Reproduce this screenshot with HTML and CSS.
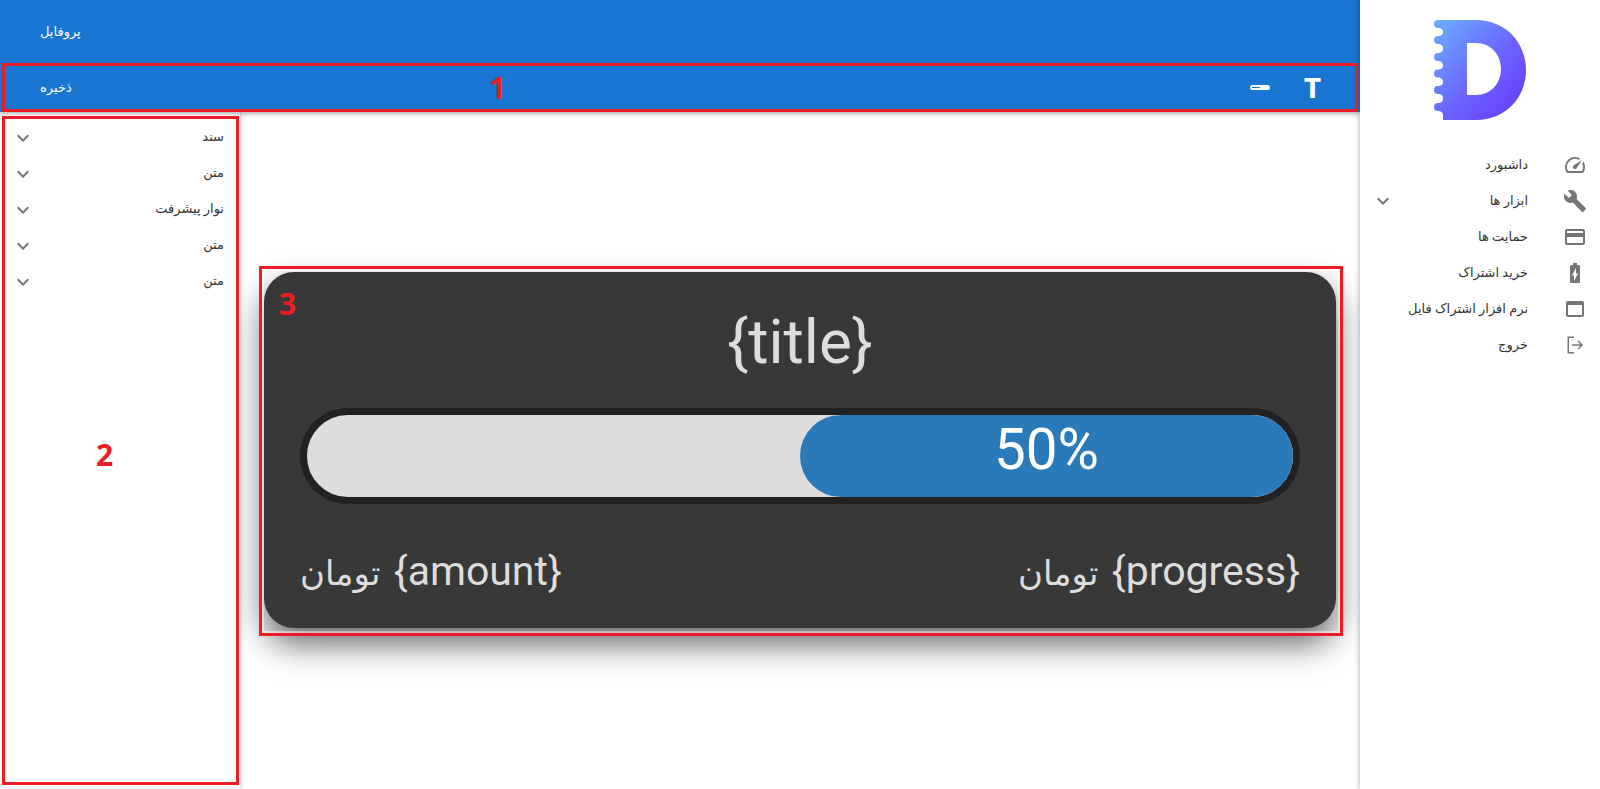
FILE: index.html
```html
<!DOCTYPE html>
<html lang="fa" dir="rtl">
<head>
    <meta charset="UTF-8">
    <meta name="viewport" content="width=device-width, initial-scale=1.0">
    <title>پروفایل</title>
    <link rel="stylesheet" href="styles.css">
</head>
<body>
    <div class="layout">
        <aside class="drawer">
            <div class="logo">
                <svg width="92" height="100" viewBox="0 0 92 100">
                    <defs>
                        <linearGradient id="logoFill" x1="0" y1="0" x2="1" y2="1">
                            <stop offset="0" stop-color="#6cb0ff"/>
                            <stop offset="0.55" stop-color="#6a62ff"/>
                            <stop offset="1" stop-color="#6a34ff"/>
                        </linearGradient>
                    </defs>
                    <path fill="url(#logoFill)" fill-rule="evenodd" d="M4 0H42C71 0 92 22 92 50S71 100 42 100H9V95.500C9 92 6.500 91 4 91A4 4 0 0 1 4 83C6.500 83 9 82 9 78.500C9 75 6.500 74 4 74A4 4 0 0 1 4 66C6.500 66 9 65 9 62C9 58.500 6.500 57.500 4 57.500A4 4 0 0 1 4 49.500C6.500 49.500 9 48.500 9 45.500C9 42 6.500 41 4 41A4 4 0 0 1 4 33C6.500 33 9 32 9 28.500C9 25 6.500 24 4 24A4 4 0 0 1 4 16C6.500 16 9 15 9 12C9 9 6.500 8 4 8A4 4 0 0 1 4 0ZM33 23V75H42C57 75 67 63 67 49S57 23 42 23Z"/>
                </svg>
            </div>
            <nav class="nav-list">
                <a class="nav-item">
                    <svg class="icon" viewBox="0 0 24 24"><path d="M20.38 8.57l-1.23 1.85a8 8 0 0 1-.22 7.58H5.07A8 8 0 0 1 15.58 6.85l1.85-1.23A10 10 0 0 0 3.35 19a2 2 0 0 0 1.72 1h13.85a2 2 0 0 0 1.74-1 10 10 0 0 0-.27-10.44zm-9.79 6.84a2 2 0 0 0 2.83 0l5.66-8.49-8.49 5.66a2 2 0 0 0 0 2.83z"/></svg>
                    <span class="nav-text">داشبورد</span>
                </a>
                <a class="nav-item">
                    <svg class="icon" viewBox="0 0 24 24"><path d="M22.7 19l-9.1-9.1c.9-2.3.4-5-1.5-6.9-2-2-5-2.4-7.4-1.3L9 6 6 9 1.6 4.7C.4 7.1.9 10.1 2.9 12.1c1.9 1.9 4.6 2.4 6.9 1.5l9.1 9.1c.4.4 1 .4 1.4 0l2.3-2.3c.5-.4.5-1.1.1-1.4z"/></svg>
                    <span class="nav-text">ابزار ها</span>
                    <svg class="icon chevron" viewBox="0 0 24 24"><path d="M16.59 8.59L12 13.17 7.41 8.59 6 10l6 6 6-6z"/></svg>
                </a>
                <a class="nav-item">
                    <svg class="icon" viewBox="0 0 24 24"><path d="M20 4H4c-1.11 0-1.99.89-1.99 2L2 18c0 1.11.89 2 2 2h16c1.11 0 2-.89 2-2V6c0-1.11-.89-2-2-2zm0 14H4v-6h16v6zm0-10H4V6h16v2z"/></svg>
                    <span class="nav-text">حمایت ها</span>
                </a>
                <a class="nav-item">
                    <svg class="icon" viewBox="0 0 24 24"><path d="M15.67 4H14V2h-4v2H8.33C7.6 4 7 4.6 7 5.33v15.33C7 21.4 7.6 22 8.33 22h7.33c.74 0 1.34-.6 1.34-1.33V5.33C17 4.6 16.4 4 15.67 4zM11 20v-5.5H9L13 7v5.5h2L11 20z"/></svg>
                    <span class="nav-text">خرید اشتراک</span>
                </a>
                <a class="nav-item">
                    <svg class="icon" viewBox="0 0 24 24"><path d="M19 4H5c-1.11 0-2 .9-2 2v12c0 1.1.89 2 2 2h14c1.1 0 2-.9 2-2V6c0-1.1-.89-2-2-2zm0 14H5V8h14v10z"/></svg>
                    <span class="nav-text">نرم افزار اشتراک فایل</span>
                </a>
                <a class="nav-item">
                    <svg class="icon" viewBox="0 0 24 24"><path d="M11 3.500H4.500v17H11v-1.400H6V4.900h5zM15.600 7.600l-1 1 2.700 2.700H9v1.400h8.300l-2.700 2.700 1 1L20 12z"/></svg>
                    <span class="nav-text">خروج</span>
                </a>
            </nav>
        </aside>

        <div class="main">
            <header class="appbar">
                <div class="appbar-row">
                    <span class="appbar-title">پروفایل</span>
                </div>
                <div class="toolbar">
                    <div class="toolbar-icons">
                        <span class="tool-t">T</span>
                        <span class="tool-bar"><i></i></span>
                    </div>
                    <span class="appbar-title">ذخیره</span>
                </div>
            </header>

            <div class="workspace">
                <div class="canvas">
                    <div class="card">
                        <div class="card-title" dir="ltr">{title}</div>
                        <div class="progress" dir="ltr">
                            <div class="progress-fill">50%</div>
                        </div>
                        <div class="card-footer">
                            <span>{progress} <span class="unit">تومان</span></span>
                            <span>{amount} <span class="unit">تومان</span></span>
                        </div>
                    </div>
                </div>

                <div class="panel">
                    <div class="panel-row"><span>سند</span><svg class="icon" viewBox="0 0 24 24"><path d="M16.59 8.59L12 13.17 7.41 8.59 6 10l6 6 6-6z"/></svg></div>
                    <div class="panel-row"><span>متن</span><svg class="icon" viewBox="0 0 24 24"><path d="M16.59 8.59L12 13.17 7.41 8.59 6 10l6 6 6-6z"/></svg></div>
                    <div class="panel-row"><span>نوار پیشرفت</span><svg class="icon" viewBox="0 0 24 24"><path d="M16.59 8.59L12 13.17 7.41 8.59 6 10l6 6 6-6z"/></svg></div>
                    <div class="panel-row"><span>متن</span><svg class="icon" viewBox="0 0 24 24"><path d="M16.59 8.59L12 13.17 7.41 8.59 6 10l6 6 6-6z"/></svg></div>
                    <div class="panel-row"><span>متن</span><svg class="icon" viewBox="0 0 24 24"><path d="M16.59 8.59L12 13.17 7.41 8.59 6 10l6 6 6-6z"/></svg></div>
                </div>
            </div>
        </div>
    </div>

    <!-- red notes drawn over the screenshot -->
    <div class="note note-toolbar"></div>
    <div class="note note-panel"></div>
    <div class="note note-card"></div>
    <span class="note-num num-1">1</span>
    <span class="note-num num-2">2</span>
    <span class="note-num num-3">3</span>
</body>
</html>
```

FILE: styles.css
```css
* {
    margin: 0;
    padding: 0;
    box-sizing: border-box;
}

html, body {
    height: 100%;
    overflow: hidden;
}

body {
    font-family: Roboto, 'DejaVu Sans', sans-serif;
    font-size: 13px;
    color: #333333;
    background: #ffffff;
    position: relative;
}

.layout {
    display: flex;
    height: 100vh;
}

.icon {
    width: 24px;
    height: 24px;
    fill: #757575;
    flex-shrink: 0;
}

/* right drawer */
.drawer {
    width: 240px;
    flex-shrink: 0;
    background: #ffffff;
    box-shadow: 0 0 6px rgba(0, 0, 0, 0.35);
    position: relative;
    z-index: 3;
}

.logo {
    display: flex;
    padding: 20px 74px 0 0;
    height: 147px;
}

.nav-item {
    display: flex;
    align-items: center;
    height: 36px;
    padding: 0 13px 0 11px;
}

.nav-text {
    margin-right: 35px;
    padding-bottom: 2px;
    flex: 1;
}

/* top bars */
.main {
    flex: 1;
    min-width: 0;
    display: flex;
    flex-direction: column;
}

.appbar {
    background: #1976d2;
    color: #ffffff;
    height: 112px;
    flex-shrink: 0;
    box-shadow: 0 2px 4px rgba(0, 0, 0, 0.3);
    position: relative;
    z-index: 2;
}

.appbar-row {
    height: 63px;
    display: flex;
    align-items: center;
    justify-content: flex-end;
    padding: 0 40px;
}

.toolbar {
    height: 49px;
    display: flex;
    align-items: center;
    justify-content: space-between;
    padding: 0 38px 0 40px;
}

.appbar-title {
    font-size: 13px;
    font-weight: 500;
}

.toolbar-icons {
    display: flex;
    align-items: center;
    gap: 33px;
}

.tool-t {
    font-size: 27px;
    font-weight: 900;
    line-height: 1;
    width: 19px;
    margin-top: 3px;
    text-align: center;
}

.tool-bar {
    width: 20px;
    height: 5px;
    border-radius: 3px;
    background: #ffffff;
    display: flex;
    align-items: center;
    justify-content: flex-end;
    padding: 0 2px;
}

.tool-bar i {
    width: 8px;
    height: 1px;
    background: #1976d2;
}

/* workspace */
.workspace {
    flex: 1;
    display: flex;
    min-height: 0;
}

.canvas {
    flex: 1;
    min-width: 0;
    display: flex;
    align-items: center;
    padding: 0 24px 1px;
}

.panel {
    width: 240px;
    flex-shrink: 0;
    padding: 8px 0 0 11px;
    box-shadow: 0 0 5px rgba(0, 0, 0, 0.3);
    background: #ffffff;
}

.panel-row {
    height: 36px;
    display: flex;
    align-items: center;
    justify-content: space-between;
    padding-right: 16px;
}

.panel-row span {
    padding-bottom: 3px;
}

/* the card being edited */
.card {
    width: 100%;
    height: 356px;
    padding: 34px 36px 36px;
    background: #383838;
    color: #dddddd;
    border-radius: 30px;
    box-shadow: 0 16px 34px rgba(0, 0, 0, 0.6);
    display: flex;
    flex-direction: column;
}

.card-title {
    font-size: 62px;
    line-height: 72px;
    text-align: center;
    margin-bottom: 30px;
}

.progress {
    height: 96px;
    flex-shrink: 0;
    border: 7px solid #222222;
    border-radius: 48px;
    background: #dddddd;
    overflow: hidden;
    display: flex;
    justify-content: flex-end;
}

.progress-fill {
    width: 50%;
    background: #2a7aba;
    color: #ffffff;
    font-size: 56.5px;
    line-height: 71px;
    text-align: center;
    border-radius: 41px 0 0 41px;
}

.card-footer {
    margin-top: 43px;
    height: 52px;
    display: flex;
    justify-content: space-between;
    align-items: center;
    font-size: 41px;
}

.unit {
    font-size: 34px;
    margin-right: 3px;
}

/* red notes */
.note {
    position: absolute;
    border: 3px solid #ed1c24;
    z-index: 5;
}

.note-toolbar {
    left: 2px;
    top: 63px;
    width: 1356px;
    height: 49px;
}

.note-panel {
    left: 2px;
    top: 116px;
    width: 237px;
    height: 669px;
}

.note-card {
    left: 259px;
    top: 266px;
    width: 1084px;
    height: 370px;
    box-shadow: inset 0 0 0 2px rgba(255, 255, 255, 0.45);
}

.note-num {
    position: absolute;
    color: #ed1c24;
    font-family: 'Open Sans', sans-serif;
    font-weight: 700;
    font-size: 30px;
    line-height: 1;
    z-index: 6;
}

.num-1 {
    left: 489px;
    top: 73px;
}

.num-2 {
    left: 96px;
    top: 440px;
}

.num-3 {
    left: 279px;
    top: 289px;
}
```
